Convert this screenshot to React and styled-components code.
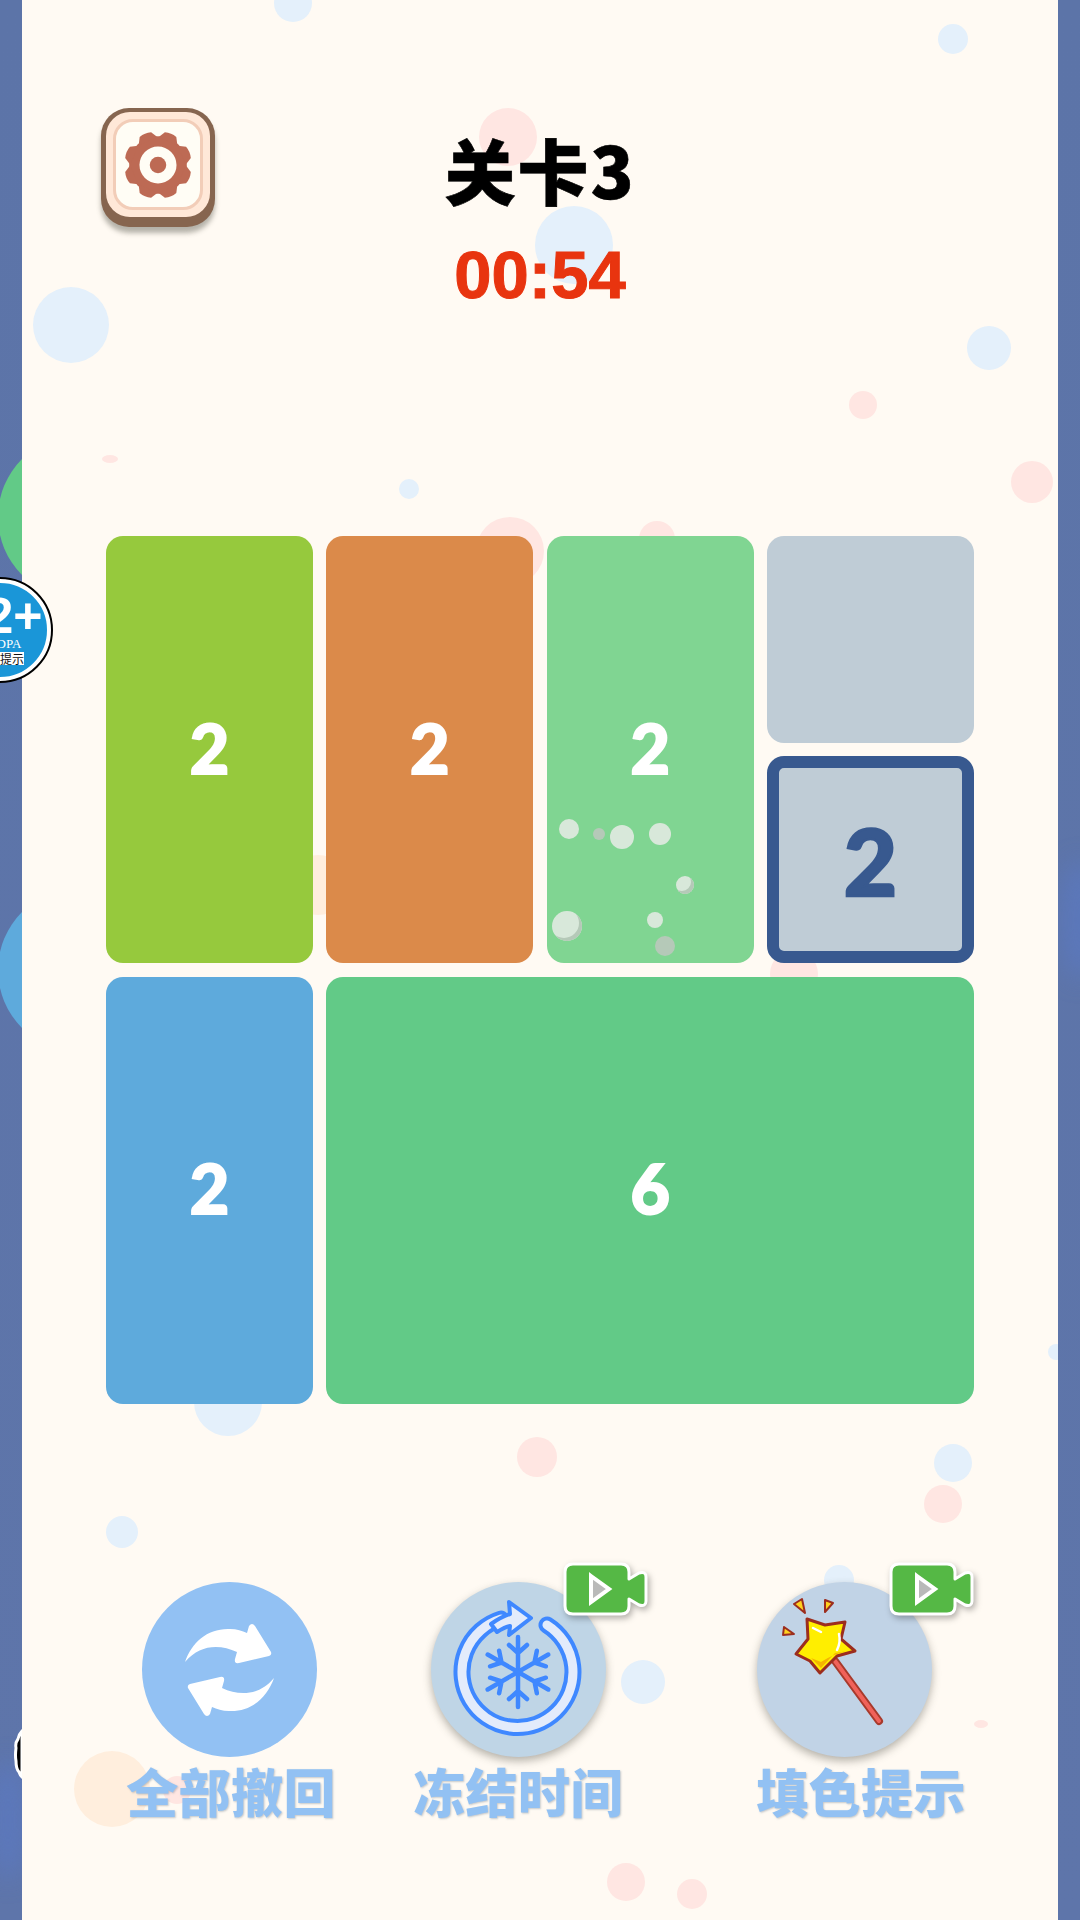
import React from 'react';
import styled, { createGlobalStyle } from 'styled-components';

const GlobalStyle = createGlobalStyle`
	html, body {
		margin: 0;
		padding: 0;
		background: #5c74a8;
	}
	#root {
		width: 1080px;
		height: 1920px;
		overflow: hidden;
	}
`;

const CJK = `"Noto Sans CJK SC", "Noto Sans", sans-serif`;

const Page = styled.div`
	position: relative;
	display: flex;
	width: 1080px;
	height: 1920px;
	overflow: hidden;
	background: #5c74a8;
`;

const Strip = styled.div`
	position: relative;
	flex: 0 0 22px;
	overflow: hidden;
	background: linear-gradient(180deg, #5c74a8 0%, #5e75aa 100%);
`;

const StripGlow = styled.div`
	position: absolute;
	left: ${p => p.$x}px;
	top: ${p => p.$y}px;
	width: 40px;
	height: 120px;
	border-radius: 50%;
	background: rgba(90, 125, 220, 0.35);
	filter: blur(12px);
`;

const SideDisc = styled.div`
	position: absolute;
	left: -2px;
	top: ${p => p.$y}px;
	width: 164px;
	height: 164px;
	border-radius: 50%;
	background: ${p => p.$color};
`;

const AgeBadge = styled.div`
	position: absolute;
	z-index: 3;
	left: -52px;
	top: 578px;
	box-sizing: border-box;
	display: flex;
	flex-direction: column;
	align-items: center;
	width: 104px;
	height: 104px;
	padding-top: 12px;
	border-radius: 50%;
	border: 5px solid #fff;
	outline: 2px solid #000;
	outline-offset: -1px;
	background: #1a96d8;
	color: #fff;
	font-family: "Liberation Sans", sans-serif;
`;

const AgeNumber = styled.div`
	height: 42px;
	font-size: 50px;
	font-weight: 700;
	line-height: 42px;
	white-space: nowrap;
`;

const AgeOrg = styled.div`
	height: 13px;
	font-family: "Liberation Serif", serif;
	font-size: 13px;
	line-height: 13px;
`;

const AgeNote = styled.div`
	margin-top: 2px;
	background: #fff;
	color: #111;
	font-family: ${CJK};
	font-size: 12px;
	line-height: 13px;
	white-space: nowrap;
`;

const EdgeSticker = styled.svg`
	position: absolute;
	z-index: 3;
	left: 10px;
	top: 1728px;
`;

const Panel = styled.main`
	position: relative;
	flex: 1;
	overflow: hidden;
	background: #fffaf3;
`;

const tones = {
	blue: '#e4f0fb',
	pink: '#ffe6e2',
	orange: '#ffeedd',
};

const Bubble = styled.div`
	position: absolute;
	left: ${p => p.$x - p.$r - 22}px;
	top: ${p => p.$y - (p.$ry || p.$r)}px;
	width: ${p => p.$r * 2}px;
	height: ${p => (p.$ry || p.$r) * 2}px;
	border-radius: 50%;
	background: ${p => tones[p.$tone]};
`;

const Content = styled.div`
	position: relative;
	z-index: 1;
	display: flex;
	flex-direction: column;
`;

const Header = styled.header`
	display: grid;
	grid-template-columns: 1fr auto 1fr;
	height: 536px;
	padding-top: 108px;
	box-sizing: border-box;
`;

const GearButton = styled.button`
	position: relative;
	box-sizing: border-box;
	justify-self: start;
	width: 114px;
	height: 119px;
	margin-left: 79px;
	padding: 4px 5px 10px;
	border: 0;
	border-radius: 28px;
	background: #86654f;
	box-shadow: 0 6px 5px rgba(90, 90, 80, 0.45);
`;

const GearFace = styled.div`
	box-sizing: border-box;
	display: flex;
	align-items: center;
	justify-content: center;
	height: 100%;
	padding: 7px;
	border-radius: 24px;
	background: #ffe8d8;
`;

const GearInner = styled.div`
	box-sizing: border-box;
	display: flex;
	align-items: center;
	justify-content: center;
	width: 100%;
	height: 100%;
	border: 3px solid #f2cdb8;
	border-radius: 20px;
	background: #fffdf5;
`;

const TitleBlock = styled.div`
	display: flex;
	flex-direction: column;
	align-items: center;
`;

const Title = styled.h1`
	margin: 16px 0 0;
	color: #000;
	font-family: ${CJK};
	font-size: 71px;
	font-weight: 900;
	line-height: 88px;
	letter-spacing: 2px;
	-webkit-text-stroke: 0.6px #000;
`;

const Timer = styled.div`
	margin-top: 30px;
	color: #e8340f;
	font-family: "Liberation Sans", sans-serif;
	font-size: 67px;
	font-weight: 700;
	line-height: 66px;
	-webkit-text-stroke: 1px #e8340f;
`;

const Board = styled.section`
	display: grid;
	grid-template-columns: repeat(4, 207px);
	grid-auto-rows: 207px;
	gap: 13.33px;
	margin-left: 84px;
	width: 868px;
`;

const Tile = styled.div`
	position: relative;
	box-sizing: border-box;
	display: flex;
	align-items: center;
	justify-content: center;
	grid-column: span ${p => p.$cols || 1};
	grid-row: span ${p => p.$rows || 1};
	padding-top: ${p => (p.$selected ? 3 : 0)}px;
	padding-bottom: ${p => (p.$selected ? 0 : 4)}px;
	border-radius: 17px;
	background: ${p => p.$color};
	border: ${p => (p.$selected ? '12px solid #38598f' : '0')};
	color: ${p => (p.$selected ? '#38598f' : '#fff')};
	font-family: Lato, sans-serif;
	font-size: ${p => (p.$selected ? 92 : 68)}px;
	font-weight: 900;
	line-height: 1;
	-webkit-text-stroke: ${p => (p.$selected ? 2.5 : 2)}px ${p => (p.$selected ? '#38598f' : '#fff')};
`;

const Spark = styled.span`
	position: absolute;
	left: ${p => p.$x - p.$r}px;
	top: ${p => p.$y - p.$r}px;
	width: ${p => p.$r * 2}px;
	height: ${p => p.$r * 2}px;
	border-radius: 50%;
	background: ${p => (p.$dim ? '#b5c9b8' : '#d8e8da')};
	box-shadow: ${p => (p.$edge ? 'inset -3px -3px 0 #b5c9b8' : 'none')};
`;

const Tools = styled.section`
	display: flex;
	margin-top: 178px;
	margin-left: 106px;
`;

const Tool = styled.div`
	position: relative;
	display: flex;
	flex-direction: column;
	align-items: center;
	width: 206px;
	margin-left: ${p => p.$gap || 0}px;
`;

const ToolDisc = styled.div`
	position: relative;
	display: block;
	width: 175px;
	height: 175px;
	margin-left: ${p => p.$shift || 0}px;
	border-radius: 50%;
	background: ${p => p.$color};
	box-shadow: ${p => (p.$raised ? '0 4px 9px rgba(70, 70, 60, 0.4)' : 'none')};
`;

const ToolLabel = styled.div`
	margin-top: 4px;
	color: #92c1f3;
	font-family: ${CJK};
	font-size: 52px;
	font-weight: 900;
	line-height: 60px;
	letter-spacing: 0.4px;
	white-space: nowrap;
	text-shadow: 1px 1px 2px rgba(90, 110, 130, 0.35);
`;

const VideoTag = styled.svg`
	position: absolute;
	left: 132px;
	top: -20px;
	filter: drop-shadow(2px 3px 3px rgba(0, 0, 0, 0.3));
`;

const bubbles = [
	{ x: 293, y: 3, r: 19, tone: 'blue' },
	{ x: 953, y: 39, r: 15, tone: 'blue' },
	{ x: 574, y: 245, r: 39, tone: 'blue' },
	{ x: 71, y: 325, r: 38, tone: 'blue' },
	{ x: 989, y: 348, r: 22, tone: 'blue' },
	{ x: 409, y: 489, r: 10, tone: 'blue' },
	{ x: 228, y: 1402, r: 34, tone: 'blue' },
	{ x: 953, y: 1463, r: 19, tone: 'blue' },
	{ x: 122, y: 1532, r: 16, tone: 'blue' },
	{ x: 839, y: 1580, r: 15, tone: 'blue' },
	{ x: 643, y: 1682, r: 22, tone: 'blue' },
	{ x: 1056, y: 1352, r: 8, tone: 'blue' },
	{ x: 508, y: 137, r: 29, tone: 'pink' },
	{ x: 863, y: 405, r: 14, tone: 'pink' },
	{ x: 1032, y: 482, r: 21, tone: 'pink' },
	{ x: 110, y: 459, r: 8, ry: 4, tone: 'pink' },
	{ x: 510, y: 551, r: 34, tone: 'pink' },
	{ x: 657, y: 539, r: 18, tone: 'pink' },
	{ x: 794, y: 974, r: 24, tone: 'pink' },
	{ x: 537, y: 1457, r: 20, tone: 'pink' },
	{ x: 943, y: 1504, r: 19, tone: 'pink' },
	{ x: 981, y: 1724, r: 7, ry: 4, tone: 'pink' },
	{ x: 626, y: 1882, r: 19, tone: 'pink' },
	{ x: 692, y: 1894, r: 15, tone: 'pink' },
	{ x: 112, y: 1789, r: 38, tone: 'orange' },
	{ x: 177, y: 1790, r: 14, tone: 'pink' },
	{ x: 318, y: 885, r: 30, tone: 'orange' },
];

const sparks = [
	{ x: 22, y: 293, r: 10 },
	{ x: 52, y: 298, r: 6, dim: true },
	{ x: 75, y: 301, r: 12 },
	{ x: 113, y: 298, r: 11 },
	{ x: 138, y: 349, r: 9, edge: true },
	{ x: 20, y: 390, r: 15, edge: true },
	{ x: 108, y: 384, r: 8 },
	{ x: 118, y: 410, r: 10, dim: true },
];

const GearIcon = () => (
	<svg width="70" height="70" viewBox="0 0 68 68">
		<g fill="#bd6a54">
			<circle cx="34" cy="34" r="28" />
			{[0, 45, 90, 135, 180, 225, 270, 315].map(a => (
				<path key={a} d="M24 9 L28 2 Q34 0 40 2 L44 9Z" transform={`rotate(${a + 22.5} 34 34)`} />
			))}
		</g>
		<circle cx="34" cy="34" r="18" fill="#fffdf5" />
		<circle cx="34" cy="34" r="8" fill="#bd6a54" />
	</svg>
);

const SwapIcon = () => (
	<svg width="175" height="175" viewBox="0 0 175 175" fill="#fff">
		<path d="M43 80 C50 60 66 46 88 47 C95 47 100 49 105 51 L107 44 Q110 40 113 44 L129 70 Q130 73 127 74 L97 81 Q92 82 93 77 L95 70 C78 62 58 62 43 80Z" />
		<path d="M43 80 C50 60 66 46 88 47 C95 47 100 49 105 51 L107 44 Q110 40 113 44 L129 70 Q130 73 127 74 L97 81 Q92 82 93 77 L95 70 C78 62 58 62 43 80Z" transform="rotate(180 87.5 88)" />
	</svg>
);

const FreezeIcon = () => (
	<svg width="175" height="175" viewBox="0 0 175 175" fill="none" strokeLinecap="round" strokeLinejoin="round">
		<path d="M116 43 A55.5 55.5 0 1 1 70 37" stroke="#3f88ff" strokeWidth="17" />
		<path d="M116 43 A55.5 55.5 0 1 1 70 37" stroke="#e3ebfb" strokeWidth="9" />
		<path d="M60 42 Q70 35 79 32 L78 20 L100 36 L78 53 L79 44 Q74 45 66 50Z" fill="#e3ebfb" stroke="#3f88ff" strokeWidth="4" />
		<g stroke="#3f88ff" strokeWidth="4.5">
			{[0, 60, 120, 180, 240, 300].map(a => (
				<g key={a} transform={`rotate(${a} 87 90)`}>
					<path d="M87 90 V55 M78 63 L87 71 L96 63" />
				</g>
			))}
		</g>
	</svg>
);

const WandIcon = () => (
	<svg width="175" height="175" viewBox="0 0 175 175" strokeLinejoin="round" strokeLinecap="round">
		<path d="M78 79 L122 139" stroke="#a83a2c" strokeWidth="8" />
		<path d="M78 79 L122 139" stroke="#f0625a" strokeWidth="4" />
		<path d="M50 37 L68 43 L88 40 L84 57 L98 69 L80 74 L63 91 L53 79 L39 72 L51 57Z" fill="#ffee00" stroke="#9c2d1e" strokeWidth="3" />
		<path d="M44 72 L54 76 L64 86 L78 71 L90 69 Q76 72 64 80 Q54 76 44 72Z" fill="#f5b400" />
		<path d="M82 52 Q84 60 80 68" fill="none" stroke="#fff" strokeWidth="2.5" />
		<path d="M56 46 L64 50" fill="none" stroke="#fff" strokeWidth="2.5" />
		<g fill="#ffd21e" stroke="#9c2d1e" strokeWidth="2">
			<path d="M37 22 L45 17 L48 31Z" />
			<path d="M68 18 L76 21 L68 30Z" />
			<path d="M27 45 L37 52 L26 53Z" />
		</g>
	</svg>
);

const cameraBody = 'M10 2 H58 Q66 2 66 10 V17 L76 11 Q83 9 83 15 V39 Q83 45 76 43 L66 37 V44 Q66 52 58 52 H10 Q2 52 2 44 V10 Q2 2 10 2Z';

const VideoIcon = () => (
	<VideoTag width="85" height="54" viewBox="0 0 85 54">
		<path d={cameraBody} fill="#55b845" stroke="#fff" strokeWidth="3" strokeLinejoin="round" />
		<path d="M28 14 L46 27 L28 40Z" fill="#b9b9b9" stroke="#fff" strokeWidth="4" strokeLinejoin="miter" />
	</VideoTag>
);

const App = () => (
	<>
		<GlobalStyle />
		<Page>
			<Strip>
				<SideDisc $y={435} $color="#62ca87" />
				<SideDisc $y={888} $color="#5eaadc" />
				<StripGlow $x={-12} $y={1760} />
			</Strip>
			<Panel>
				{bubbles.map(b => (
					<Bubble key={`${b.x}-${b.y}`} $x={b.x} $y={b.y} $r={b.r} $ry={b.ry} $tone={b.tone} />
				))}
				<Content>
					<Header>
						<GearButton aria-label="设置">
							<GearFace>
								<GearInner>
									<GearIcon />
								</GearInner>
							</GearFace>
						</GearButton>
						<TitleBlock>
							<Title>关卡3</Title>
							<Timer>00:54</Timer>
						</TitleBlock>
					</Header>
					<Board>
						<Tile $rows={2} $color="#96c93d">2</Tile>
						<Tile $rows={2} $color="#db8a4a">2</Tile>
						<Tile $rows={2} $color="#80d592">
							2
							{sparks.map(s => (
								<Spark key={`${s.x}-${s.y}`} $x={s.x} $y={s.y} $r={s.r} $dim={s.dim} $edge={s.edge} />
							))}
						</Tile>
						<Tile $color="#bfccd6" />
						<Tile $color="#bfccd6" $selected>2</Tile>
						<Tile $rows={2} $color="#5eaadc">2</Tile>
						<Tile $rows={2} $cols={3} $color="#62ca87">6</Tile>
					</Board>
					<Tools>
						<Tool>
							<ToolDisc $color="#92c1f3" $shift={-4}>
								<SwapIcon />
							</ToolDisc>
							<ToolLabel>全部撤回</ToolLabel>
						</Tool>
						<Tool $gap={81}>
							<ToolDisc $color="#bfd5e6" $raised>
								<FreezeIcon />
								<VideoIcon />
							</ToolDisc>
							<ToolLabel>冻结时间</ToolLabel>
						</Tool>
						<Tool $gap={137}>
							<ToolDisc $color="#c1d3e6" $raised $shift={-34}>
								<WandIcon />
								<VideoIcon />
							</ToolDisc>
							<ToolLabel>填色提示</ToolLabel>
						</Tool>
					</Tools>
				</Content>
			</Panel>
			<Strip>
				<StripGlow $x={2} $y={860} />
			</Strip>
			<AgeBadge>
				<AgeNumber>12+</AgeNumber>
				<AgeOrg>CADPA</AgeOrg>
				<AgeNote>适龄提示</AgeNote>
			</AgeBadge>
			<EdgeSticker width="12" height="52" viewBox="0 0 12 52">
				<path d="M12 3 Q9 6 8 11 Q5 15 6 20 Q5 28 6 33 Q6 41 9 44 Q10 47 12 49Z" fill="#000" stroke="#fff" strokeWidth="3" />
			</EdgeSticker>
		</Page>
	</>
);

export default App;
